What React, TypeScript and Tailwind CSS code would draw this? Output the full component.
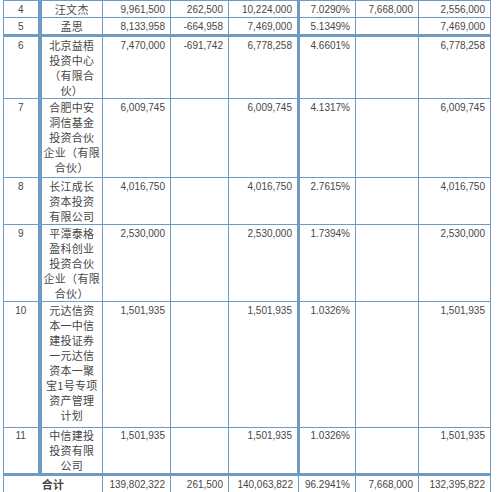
const rows = [
  { no: "4", name: ["汪文杰"], a: "9,961,500", b: "262,500", c: "10,224,000", p: "7.0290%", d: "7,668,000", e: "2,556,000", h: "h-[16px]", top: "", pt: "pt-px" },
  { no: "5", name: ["孟思"], a: "8,133,958", b: "-664,958", c: "7,469,000", p: "5.1349%", d: "", e: "7,469,000", h: "h-[16px]", top: "", pt: "pt-px" },
  { no: "6", name: ["北京益梧", "投资中心", "（有限合", "伙）"], a: "7,470,000", b: "-691,742", c: "6,778,258", p: "4.6601%", d: "", e: "6,778,258", h: "h-[63px]", top: "border-t-[3px] border-t-double", pt: "pt-px" },
  { no: "7", name: ["合肥中安", "洞信基金", "投资合伙", "企业（有限", "合伙）"], a: "6,009,745", b: "", c: "6,009,745", p: "4.1317%", d: "", e: "6,009,745", h: "h-[79px]", top: "", pt: "pt-px" },
  { no: "8", name: ["长江成长", "资本投资", "有限公司"], a: "4,016,750", b: "", c: "4,016,750", p: "2.7615%", d: "", e: "4,016,750", h: "h-[47px]", top: "", pt: "pt-px" },
  { no: "9", name: ["平潭泰格", "盈科创业", "投资合伙", "企业（有限", "合伙）"], a: "2,530,000", b: "", c: "2,530,000", p: "1.7394%", d: "", e: "2,530,000", h: "h-[77px]", top: "", pt: "pt-px" },
  { no: "10", name: ["元达信资", "本一中信", "建投证券", "一元达信", "资本一聚", "宝1号专项", "资产管理", "计划"], a: "1,501,935", b: "", c: "1,501,935", p: "1.0326%", d: "", e: "1,501,935", h: "h-[126px]", top: "", pt: "pt-px" },
  { no: "11", name: ["中信建投", "投资有限", "公司"], a: "1,501,935", b: "", c: "1,501,935", p: "1.0326%", d: "", e: "1,501,935", h: "h-[45px]", top: "", pt: "pt-0" },
];

const cell = "border border-[#6f9bc2] align-top leading-[15px]";
const num = `${cell} text-right pr-[5px] font-['Liberation_Sans',Arial,sans-serif] text-[10px]`;
const cjk = "font-['Noto_Sans_CJK_SC','Noto_Sans',sans-serif] text-[11px] tracking-[0.3px]";

export default function App() {
  return (
    <div className="w-[500px] h-[492px] overflow-hidden bg-white text-[#474747]">
      <table className="ml-[3px] w-[487px] table-fixed border-collapse">
        <colgroup>
          <col className="w-[36px]" />
          <col className="w-[63px]" />
          <col className="w-[68px]" />
          <col className="w-[58px]" />
          <col className="w-[70px]" />
          <col className="w-[57px]" />
          <col className="w-[63px]" />
          <col className="w-[72px]" />
        </colgroup>
        <tbody>
          {rows.map((r) => (
            <tr key={r.no} className={r.h}>
              <td className={`${cell} ${r.pt} ${r.top} text-center font-['Liberation_Sans',Arial,sans-serif] text-[10px]`}>
                {r.no}
              </td>
              <td className={`${cell} ${r.pt} ${r.top} ${cjk} text-center whitespace-nowrap border-l-[4px] border-l-double`}>
                {r.name.map((line, i) => (
                  <div key={i}>{line}</div>
                ))}
              </td>
              <td className={`${num} ${r.pt} ${r.top}`}>{r.a}</td>
              <td className={`${num} ${r.pt} ${r.top}`}>{r.b}</td>
              <td className={`${num} ${r.pt} ${r.top}`}>{r.c}</td>
              <td className={`${num} ${r.pt} ${r.top} border-l-[3px] border-l-double`}>{r.p}</td>
              <td className={`${num} ${r.pt} ${r.top}`}>{r.d}</td>
              <td className={`${num} ${r.pt} ${r.top}`}>{r.e}</td>
            </tr>
          ))}
          <tr className="h-[17px]">
            <td colSpan={2} className={`${cell} pt-px border-t-[3px] border-t-double ${cjk} text-center font-bold`}>
              合计
            </td>
            <td className={`${num} pt-px border-t-[3px] border-t-double`}>139,802,322</td>
            <td className={`${num} pt-px border-t-[3px] border-t-double`}>261,500</td>
            <td className={`${num} pt-px border-t-[3px] border-t-double`}>140,063,822</td>
            <td className={`${num} pt-px border-t-[3px] border-t-double`}>96.2941%</td>
            <td className={`${num} pt-px border-t-[3px] border-t-double`}>7,668,000</td>
            <td className={`${num} pt-px border-t-[3px] border-t-double`}>132,395,822</td>
          </tr>
        </tbody>
      </table>
    </div>
  );
}
